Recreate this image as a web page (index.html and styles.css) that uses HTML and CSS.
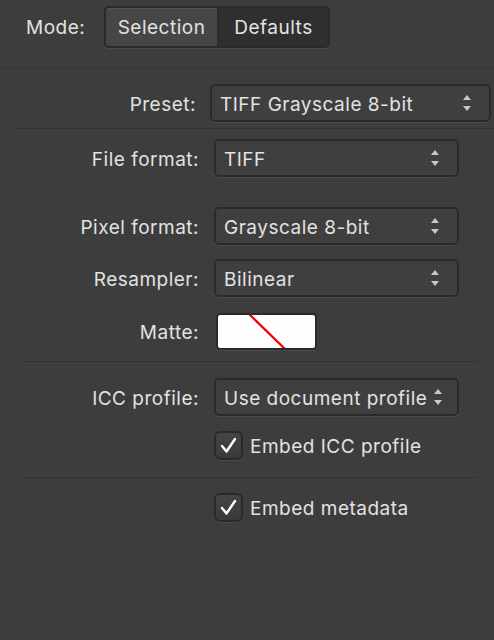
FILE: index.html
```html
<!DOCTYPE html>
<html>
<head>
<meta charset="utf-8">
<link rel="stylesheet" href="styles.css">
</head>
<body>
<div class="panel">
  <div class="mode-bar">
    <span class="mode-label">Mode:</span>
    <div class="segmented">
      <div class="seg seg-on">Selection</div>
      <div class="seg seg-off">Defaults</div>
    </div>
  </div>

  <div class="preset-row">
    <span class="label preset-label">Preset:</span>
    <div class="select preset-select"><span class="val">TIFF Grayscale 8-bit</span>
      <svg class="arrows" width="10" height="18" viewBox="0 0 10 18"><path d="M5 1 L9 6 L1 6 Z M1 12 L9 12 L5 17 Z" fill="#c8c8c8"/></svg>
    </div>
  </div>
  <div class="sep sep-preset"></div>

  <div class="row row-file">
    <span class="label">File format:</span>
    <div class="select"><span class="val">TIFF</span>
      <svg class="arrows" width="10" height="18" viewBox="0 0 10 18"><path d="M5 1 L9 6 L1 6 Z M1 12 L9 12 L5 17 Z" fill="#c8c8c8"/></svg>
    </div>
  </div>

  <div class="row row-pixel">
    <span class="label">Pixel format:</span>
    <div class="select"><span class="val">Grayscale 8-bit</span>
      <svg class="arrows" width="10" height="18" viewBox="0 0 10 18"><path d="M5 1 L9 6 L1 6 Z M1 12 L9 12 L5 17 Z" fill="#c8c8c8"/></svg>
    </div>
  </div>

  <div class="row row-resampler">
    <span class="label">Resampler:</span>
    <div class="select"><span class="val">Bilinear</span>
      <svg class="arrows" width="10" height="18" viewBox="0 0 10 18"><path d="M5 1 L9 6 L1 6 Z M1 12 L9 12 L5 17 Z" fill="#c8c8c8"/></svg>
    </div>
  </div>

  <div class="row row-matte">
    <span class="label">Matte:</span>
    <div class="swatch">
      <svg width="97" height="33" viewBox="0 0 97 33"><line x1="31" y1="-1" x2="67" y2="34" stroke="#f00000" stroke-width="2.2"/></svg>
    </div>
  </div>
  <div class="sep sep-mid"></div>

  <div class="row row-icc">
    <span class="label">ICC profile:</span>
    <div class="select"><span class="val">Use document profile</span>
      <svg class="arrows arrows-tight" width="10" height="18" viewBox="0 0 10 18"><path d="M5 1 L9 6 L1 6 Z M1 12 L9 12 L5 17 Z" fill="#c8c8c8"/></svg>
    </div>
  </div>

  <div class="check-row check-icc">
    <div class="checkbox"><svg width="25" height="25" viewBox="0 0 25 25"><path d="M6 13 L10.5 18.5 L19 6" fill="none" stroke="#ffffff" stroke-width="2.4" stroke-linecap="round" stroke-linejoin="round"/></svg></div>
    <span class="check-text">Embed ICC profile</span>
  </div>
  <div class="sep sep-low"></div>

  <div class="check-row check-meta">
    <div class="checkbox"><svg width="25" height="25" viewBox="0 0 25 25"><path d="M6 13 L10.5 18.5 L19 6" fill="none" stroke="#ffffff" stroke-width="2.4" stroke-linecap="round" stroke-linejoin="round"/></svg></div>
    <span class="check-text">Embed metadata</span>
  </div>
</div>
</body>
</html>
```

FILE: styles.css
```css
html, body {
  margin: 0;
  padding: 0;
  background: #3d3d3d;
}
body {
  width: 494px;
  height: 640px;
  overflow: hidden;
  font-family: Inter, "Open Sans", "DejaVu Sans", sans-serif;
  font-size: 19px;
  letter-spacing: 0.5px;
  color: #e2e2e2;
}
.panel {
  display: flex;
  flex-direction: column;
}
.mode-bar {
  border-bottom: 1px solid #343434;
  display: flex;
  align-items: flex-start;
  padding-top: 6px;
  box-sizing: border-box;
  height: 68px;
}
.mode-label {
  margin-left: 26px;
  width: 78px;
  line-height: 44px;
}
.segmented {
  display: flex;
  height: 42px;
  border: 2px solid #2a2a2a;
  border-radius: 5px;
  box-sizing: border-box;
  overflow: hidden;
  box-shadow: 0 1px 0 #4a4a4a;
}
.seg {
  line-height: 40px;
  text-align: center;
}
.seg-on {
  width: 111px;
  background: #464646;
  border-right: 2px solid #2c2c2c;
  box-shadow: inset 0 1px 0 #545454;
}
.seg-off {
  width: 109px;
  background: #2f2f2f;
}
.label {
  text-align: right;
  white-space: nowrap;
  padding-top: 2px;
}
.preset-row {
  display: flex;
  align-items: center;
  margin-top: 16px;
}
.preset-label {
  width: 196px;
}
.select {
  position: relative;
  height: 38px;
  box-sizing: border-box;
  border: 2px solid #2a2a2a;
  border-radius: 5px;
  background: #3f3f3f;
  box-shadow: 0 1px 0 #4b4b4b;
  display: flex;
  align-items: center;
  margin-left: 15px;
  width: 245px;
}
.preset-select {
  margin-left: 14px;
  width: 281px;
}
.val {
  padding-left: 8px;
  padding-top: 2px;
  white-space: nowrap;
}
.arrows {
  position: absolute;
  right: 17px;
  top: 8px;
}
.arrows-tight {
  right: 14px;
}
.sep {
  height: 1px;
  background: #333333;
}
.sep-preset {
  margin-top: 6px;
  margin-left: 14px;
}
.row {
  display: flex;
  align-items: center;
}
.row .label {
  width: 199px;
}
.row-file { margin-top: 10px; }
.row-pixel { margin-top: 30px; }
.row-resampler { margin-top: 14px; }
.row-matte { margin-top: 16px; }
.swatch {
  margin-left: 17px;
  width: 101px;
  height: 37px;
  box-sizing: border-box;
  border: 2px solid #2a2a2a;
  border-radius: 4px;
  background: #fdfdfd;
  box-shadow: 0 1px 0 #4b4b4b;
  overflow: hidden;
}
.swatch svg { display: block; }
.sep-mid {
  margin-top: 11px;
  margin-left: 20px;
  margin-right: 16px;
}
.row-icc { margin-top: 16px; }
.check-row {
  display: flex;
  align-items: center;
  margin-left: 214px;
}
.check-icc { margin-top: 15px; }
.check-meta { margin-top: 15px; }
.checkbox {
  width: 29px;
  height: 29px;
  box-sizing: border-box;
  border: 2px solid #2a2a2a;
  border-radius: 6px;
  background: linear-gradient(#454545, #393939);
  box-shadow: 0 1px 0 #4b4b4b;
}
.checkbox svg { display: block; }
.check-text {
  margin-left: 7px;
  padding-top: 2px;
}
.sep-low {
  margin-top: 17px;
  margin-left: 20px;
  margin-right: 16px;
}
```
